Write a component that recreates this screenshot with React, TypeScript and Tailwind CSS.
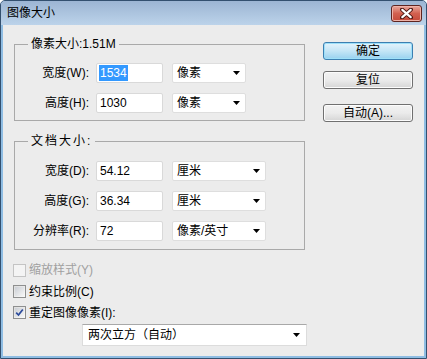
import React from "react";

const font = { fontFamily: '"Liberation Sans", "Noto Sans CJK SC", sans-serif' };

const Arrow = () => (
  <svg width="7" height="4" viewBox="0 0 7 4" className="shrink-0">
    <path d="M0 0 H7 L3.5 4 Z" fill="#000" />
  </svg>
);

const Field = ({
  label,
  value,
  unit,
  selectW,
  selected,
}: {
  label: string;
  value: string;
  unit: string;
  selectW: string;
  selected?: boolean;
}) => (
  <div className="flex items-center h-[20px]">
    <div className="w-[75px] text-right pr-[1px] leading-none">{label}</div>
    <div className="ml-[6px] w-[67px] h-[20px] bg-white border border-[#d9d9d9] rounded-[2px] flex items-center pl-[2px]">
      {selected ? (
        <span className="bg-[#3399ff] text-white px-[1px] h-[16px] flex items-center leading-none">{value}</span>
      ) : (
        <span className="px-[1px] leading-none">{value}</span>
      )}
    </div>
    <div className={`ml-[9px] ${selectW} h-[20px] bg-white border border-[#dedede] rounded-[2px] flex items-center justify-between pl-[4px] pr-[5px]`}>
      <span className="leading-none">{unit}</span>
      <Arrow />
    </div>
  </div>
);

const Check = ({ state }: { state: "disabled" | "off" | "on" }) => (
  <div
    className={`w-[13px] h-[13px] border flex items-center justify-center ${
      state === "disabled" ? "border-[#c4c4c4] bg-[#f4f4f4]" : "border-[#8e8f8f] bg-gradient-to-br from-[#dcdcdc] to-[#fafafa]"
    }`}
  >
    <div className={`w-[9px] h-[9px] ${state === "disabled" ? "bg-[#f4f4f4]" : "bg-gradient-to-br from-[#cbcfd5] to-[#f6f6f6]"} flex items-center justify-center`}>
      {state === "on" && (
        <svg width="9" height="9" viewBox="0 0 9 9">
          <path d="M1.2 4.6 L3.5 7 L7.8 1.5" stroke="#2b4a9b" strokeWidth="1.7" fill="none" />
        </svg>
      )}
    </div>
  </div>
);

const Btn = ({ children, primary }: { children: React.ReactNode; primary?: boolean }) => (
  <div
    className={`w-[90px] h-[18px] rounded-[3px] flex items-center justify-center leading-none ${
      primary
        ? "border border-[#3c7fb1] bg-gradient-to-b from-[#e5f4fc] via-[#c4e5f6] to-[#98d1ef] shadow-[inset_0_0_0_1px_#9ee0f9]"
        : "border border-[#707070] bg-gradient-to-b from-[#f2f2f2] via-[#ebebeb] to-[#d5d5d5] shadow-[inset_0_0_0_1px_#fcfcfc]"
    }`}
  >
    {children}
  </div>
);

export default function App() {
  return (
    <div style={font} className="w-[427px] h-[359px] text-[12px] text-black bg-[#8fbde3] border border-[#33506f] rounded-t-[5px] flex flex-col overflow-hidden">
      <div className="h-[24px] shrink-0 bg-gradient-to-b from-[#9cb5d3] to-[#bcd3ea] flex items-center justify-between pl-[6px] pr-[4px]">
        <span className="text-[12px] leading-none">图像大小</span>
        <div className="w-[31px] h-[17px] rounded-[3px] border border-[#5e2420] bg-gradient-to-b from-[#e7a79d] via-[#d2604f] to-[#c5493a] flex items-center justify-center shadow-[inset_0_0_0_1px_#eeb3a9]">
          <svg width="13" height="11" viewBox="0 0 13 11">
            <path d="M2 1.5 L11 9.5 M11 1.5 L2 9.5" stroke="#4a1410" strokeWidth="4" strokeLinecap="round" />
            <path d="M2.3 1.8 L10.7 9.2 M10.7 1.8 L2.3 9.2" stroke="#fff" strokeWidth="2.2" strokeLinecap="round" />
          </svg>
        </div>
      </div>
      <div className="flex-1 mx-[2px] mb-[2px] bg-[#ececec] flex flex-col">
        <div className="flex pl-[11px] pt-[11px]">
          <div className="w-[291px] flex flex-col">
            <fieldset className="border border-[#a9a9a9] pb-[7px] pt-[11px] min-w-0">
              <legend className="ml-[13px] px-[3px] leading-[16px]">像素大小:1.51M</legend>
              <div className="flex flex-col gap-[10px]">
                <Field label="宽度(W):" value="1534" unit="像素" selectW="w-[74px]" selected />
                <Field label="高度(H):" value="1030" unit="像素" selectW="w-[74px]" />
              </div>
            </fieldset>
            <fieldset className="mt-[12px] border border-[#a9a9a9] pb-[8px] pt-[12px] min-w-0">
              <legend className="ml-[13px] px-[3px] leading-[16px] tracking-[2px]">文档大小:</legend>
              <div className="flex flex-col gap-[10px]">
                <Field label="宽度(D):" value="54.12" unit="厘米" selectW="w-[94px]" />
                <Field label="高度(G):" value="36.34" unit="厘米" selectW="w-[94px]" />
                <Field label="分辨率(R):" value="72" unit="像素/英寸" selectW="w-[94px]" />
              </div>
            </fieldset>
          </div>
          <div className="ml-[18px] pt-[6px] flex flex-col">
            <Btn primary>确定</Btn>
            <div className="mt-[11px]">
              <Btn>复位</Btn>
            </div>
            <div className="mt-[15px]">
              <Btn>自动(A)...</Btn>
            </div>
          </div>
        </div>
        <div className="mt-[9px] pl-[10px] flex flex-col">
          <div className="h-[22px] flex items-center gap-[3px]">
            <Check state="disabled" />
            <span className="text-[#a0a0a0] leading-none">缩放样式(Y)</span>
          </div>
          <div className="h-[21px] flex items-center gap-[3px]">
            <Check state="off" />
            <span className="leading-none">约束比例(C)</span>
          </div>
          <div className="h-[21px] flex items-center gap-[3px]">
            <Check state="on" />
            <span className="leading-none">重定图像像素(I):</span>
          </div>
        </div>
        <div className="mt-[1px] ml-[79px] w-[225px] h-[22px] bg-white border border-[#dcdcdc] border-t-[#a8a8a8] flex items-center justify-between pl-[5px] pr-[6px]">
          <span className="leading-none">两次立方（自动）</span>
          <Arrow />
        </div>
      </div>
    </div>
  );
}
